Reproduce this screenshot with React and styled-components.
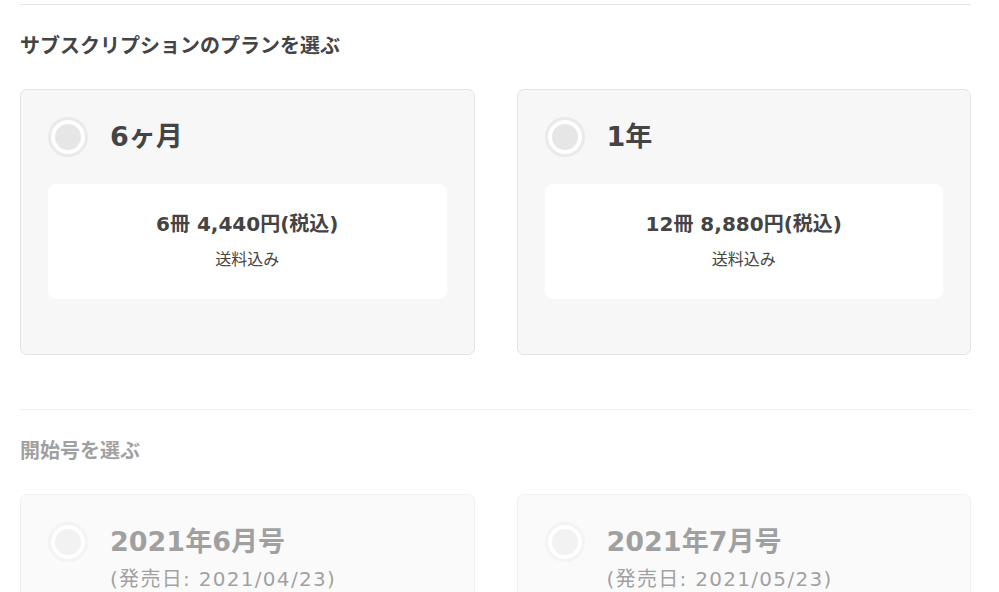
import React from "react";
import styled, { createGlobalStyle } from "styled-components";

const GlobalStyle = createGlobalStyle`
  body {
    margin: 0;
    background: #fff;
    font-family: "DejaVu Sans", "Noto Sans CJK JP", sans-serif;
    color: #444;
  }
`;

const Page = styled.div`
  width: 951px;
  padding: 4px 0 0 20px;
`;

const Section = styled.section`
  border-top: 1px solid #e5e5e5;
  padding-top: 29px;
  margin-bottom: 54px;
  opacity: ${(p) => (p.disabled ? 0.5 : 1)};
`;

const Heading = styled.h2`
  margin: 0 0 31px;
  font-size: 20px;
  line-height: 24px;
  font-weight: 700;
  color: #444;
`;

const Grid = styled.div`
  display: grid;
  grid-template-columns: 1fr 1fr;
  gap: 42px;
`;

const Card = styled.label`
  display: block;
  background: #f7f7f7;
  border: 1px solid #e3e3e3;
  border-radius: 7px;
  padding: 27px 27px 55px;
`;

const Head = styled.div`
  display: flex;
  align-items: flex-start;
  gap: 22px;
`;

const Radio = styled.span`
  flex: none;
  width: 40px;
  height: 40px;
  box-sizing: border-box;
  border-radius: 50%;
  border: 3px solid #eaeaea;
  background: #fff;
  display: flex;
  align-items: center;
  justify-content: center;
  &::after {
    content: "";
    width: 26px;
    height: 26px;
    border-radius: 50%;
    background: #e6e6e6;
  }
`;

const Titles = styled.div`
  display: flex;
  flex-direction: column;
`;

const Title = styled.div`
  font-size: 27px;
  line-height: 40px;
  font-weight: 700;
  color: #444;
`;

const Sub = styled.div`
  font-size: 20px;
  line-height: 34px;
  letter-spacing: 1.3px;
  color: #444;
`;

const Price = styled.div`
  margin-top: 27px;
  background: #fff;
  border-radius: 8px;
  padding: 26px 16px 27px;
  text-align: center;
`;

const Amount = styled.div`
  font-size: 20px;
  line-height: 28px;
  font-weight: 700;
`;

const Note = styled.div`
  margin-top: 10px;
  font-size: 16px;
  line-height: 24px;
`;

const plans = [
  { title: "6ヶ月", amount: "6冊 4,440円(税込)" },
  { title: "1年", amount: "12冊 8,880円(税込)" },
];

const issues = [
  { title: "2021年6月号", date: "(発売日: 2021/04/23)" },
  { title: "2021年7月号", date: "(発売日: 2021/05/23)" },
];

export default function App() {
  return (
    <Page>
      <GlobalStyle />
      <Section>
        <Heading>サブスクリプションのプランを選ぶ</Heading>
        <Grid>
          {plans.map((p) => (
            <Card key={p.title}>
              <Head>
                <Radio />
                <Title>{p.title}</Title>
              </Head>
              <Price>
                <Amount>{p.amount}</Amount>
                <Note>送料込み</Note>
              </Price>
            </Card>
          ))}
        </Grid>
      </Section>
      <Section disabled>
        <Heading>開始号を選ぶ</Heading>
        <Grid>
          {issues.map((i) => (
            <Card key={i.title}>
              <Head>
                <Radio />
                <Titles>
                  <Title>{i.title}</Title>
                  <Sub>{i.date}</Sub>
                </Titles>
              </Head>
            </Card>
          ))}
        </Grid>
      </Section>
    </Page>
  );
}
